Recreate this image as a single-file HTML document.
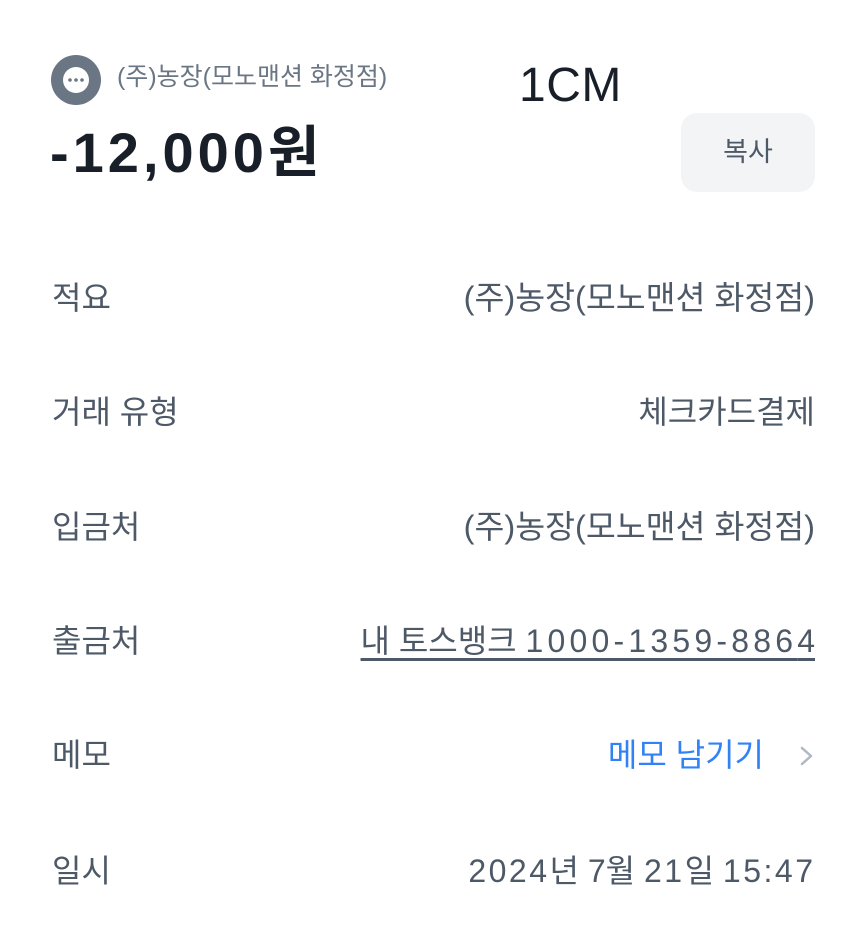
<!DOCTYPE html>
<html><head><meta charset="utf-8"><style>
body{margin:0;width:864px;height:942px;background:#fff;font-family:"Liberation Sans","Noto Sans CJK KR",sans-serif;position:relative;overflow:hidden}
.a{position:absolute;white-space:nowrap;line-height:1}
.l{left:52px;font-size:32px;color:#4e5968}
.r{right:49px;font-size:32px;color:#4e5968}
</style></head><body>
<svg class="a" style="left:51px;top:55px" width="50" height="50"><circle cx="25" cy="25" r="25" fill="#6b7684"/><circle cx="25" cy="25" r="13" fill="#fff"/><circle cx="19" cy="25" r="1.8" fill="#6b7684"/><circle cx="25" cy="25" r="1.8" fill="#6b7684"/><circle cx="31" cy="25" r="1.8" fill="#6b7684"/></svg>
<div class="a" style="left:117px;top:65px;font-size:25px;color:#6b7684">(주)농장(모노맨션 화정점)</div>
<div class="a" style="left:519px;top:62px;font-size:48px;letter-spacing:0.5px;color:#191f28">1CM</div>
<div class="a" style="left:50px;top:125px;font-size:56px;font-weight:bold;letter-spacing:4px;color:#191f28">-12,000<span style="letter-spacing:0">원</span></div>
<div class="a" style="left:681px;top:113px;width:134px;height:79px;background:#f2f4f6;border-radius:16px;font-size:27px;color:#4e5968;display:flex;align-items:center;justify-content:center">복사</div>
<div class="a l" style="top:282px">적요</div>
<div class="a r" style="top:282px;font-size:32.5px">(주)농장(모노맨션 화정점)</div>
<div class="a l" style="top:396px">거래 유형</div>
<div class="a r" style="top:396px">체크카드결제</div>
<div class="a l" style="top:511px">입금처</div>
<div class="a r" style="top:511px;font-size:32.5px">(주)농장(모노맨션 화정점)</div>
<div class="a l" style="top:625px">출금처</div>
<div class="a" style="right:49px;top:625px;font-size:32px;color:#4e5968;text-decoration:underline;text-underline-offset:6px">내 토스뱅크 <span style="letter-spacing:4.2px">1000-1359-886</span>4</div>
<div class="a l" style="top:739px">메모</div>
<div class="a" style="right:100px;top:739px;font-size:32px;color:#3182f6">메모 남기기</div>
<svg class="a" style="left:797px;top:744px" width="20" height="24"><path d="M5 4 L14 12 L5 20" fill="none" stroke="#b0b8c1" stroke-width="2.5" stroke-linecap="round" stroke-linejoin="round"/></svg>
<div class="a l" style="top:855px">일시</div>
<div class="a" style="right:51px;top:855px;font-size:32px;color:#4e5968"><span style="letter-spacing:2.5px">2024</span>년 7월 <span style="letter-spacing:2.5px">21</span>일 <span style="letter-spacing:2.5px">15:4</span>7</div>
</body></html>
